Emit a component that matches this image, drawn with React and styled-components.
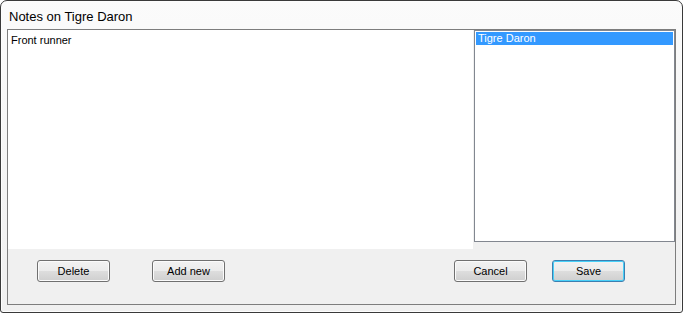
import React from "react";
import styled, { createGlobalStyle } from "styled-components";

const Global = createGlobalStyle`
  html, body { margin: 0; padding: 0; background: #ffffff; }
  body { font-family: "Liberation Sans", Arial, sans-serif; }
`;

const Window = styled.div`
  box-sizing: border-box;
  width: 683px;
  height: 313px;
  border: 1px solid #3a3a3a;
  border-radius: 7px 7px 3px 3px;
  background: linear-gradient(180deg, #fbfbfb 0%, #f3f3f3 60%, #f0f0f0 100%);
  padding: 0 6px 7px 6px;
  display: flex;
  flex-direction: column;
  box-shadow: inset 0 0 0 1px #fdfdfd;
`;

const TitleBar = styled.div`
  box-sizing: border-box;
  height: 28px;
  display: flex;
  align-items: center;
  padding: 3px 0 0 2px;
  font-family: "Liberation Sans", Arial, sans-serif;
  font-size: 13px;
  color: #000;
`;

const Client = styled.div`
  box-sizing: border-box;
  flex: 1;
  border: 1px solid #7d7d7d;
  background: #f0f0f0;
  display: flex;
  flex-direction: column;
`;

const TopRow = styled.div`
  display: flex;
  align-items: flex-start;
`;

const NotesArea = styled.div`
  box-sizing: border-box;
  width: 465px;
  height: 219px;
  background: #ffffff;
  padding: 4px 3px;
  font-family: "Liberation Sans", Arial, sans-serif;
  font-size: 11px;
  color: #000;
`;

const ListBox = styled.div`
  box-sizing: border-box;
  margin-left: 1px;
  width: 201px;
  height: 212px;
  background: #ffffff;
  border: 1px solid #828790;
  padding: 1px;
`;

const ListItem = styled.div`
  height: 13px;
  line-height: 13px;
  padding-left: 2px;
  font-family: "Liberation Sans", Arial, sans-serif;
  font-size: 11px;
  background: ${(p) => (p.$selected ? "#3399ff" : "transparent")};
  color: ${(p) => (p.$selected ? "#ffffff" : "#000")};
`;

const ButtonRow = styled.div`
  display: flex;
  align-items: center;
  padding: 11px 0 0 29px;
`;

const Button = styled.button`
  box-sizing: border-box;
  width: 73px;
  height: 22px;
  margin-left: ${(p) => p.$gap || 0}px;
  padding: 0;
  border: 1px solid ${(p) => (p.$default ? "#3c7fb1" : "#707070")};
  border-radius: 3px;
  font-family: "Liberation Sans", Arial, sans-serif;
  font-size: 11px;
  color: #000;
  background: linear-gradient(180deg, #f2f2f2 0%, #ebebeb 50%, #dddddd 51%, #cfcfcf 100%);
  box-shadow: inset 0 0 0 1px ${(p) => (p.$default ? "#48d0f8" : "#fbfbfb")};
`;

export default function App() {
  return (
    <>
      <Global />
      <Window>
        <TitleBar>Notes on Tigre Daron</TitleBar>
        <Client>
          <TopRow>
            <NotesArea>Front runner</NotesArea>
            <ListBox>
              <ListItem $selected>Tigre Daron</ListItem>
            </ListBox>
          </TopRow>
          <ButtonRow>
            <Button>Delete</Button>
            <Button $gap={42}>Add new</Button>
            <Button $gap={229}>Cancel</Button>
            <Button $gap={25} $default>
              Save
            </Button>
          </ButtonRow>
        </Client>
      </Window>
    </>
  );
}
